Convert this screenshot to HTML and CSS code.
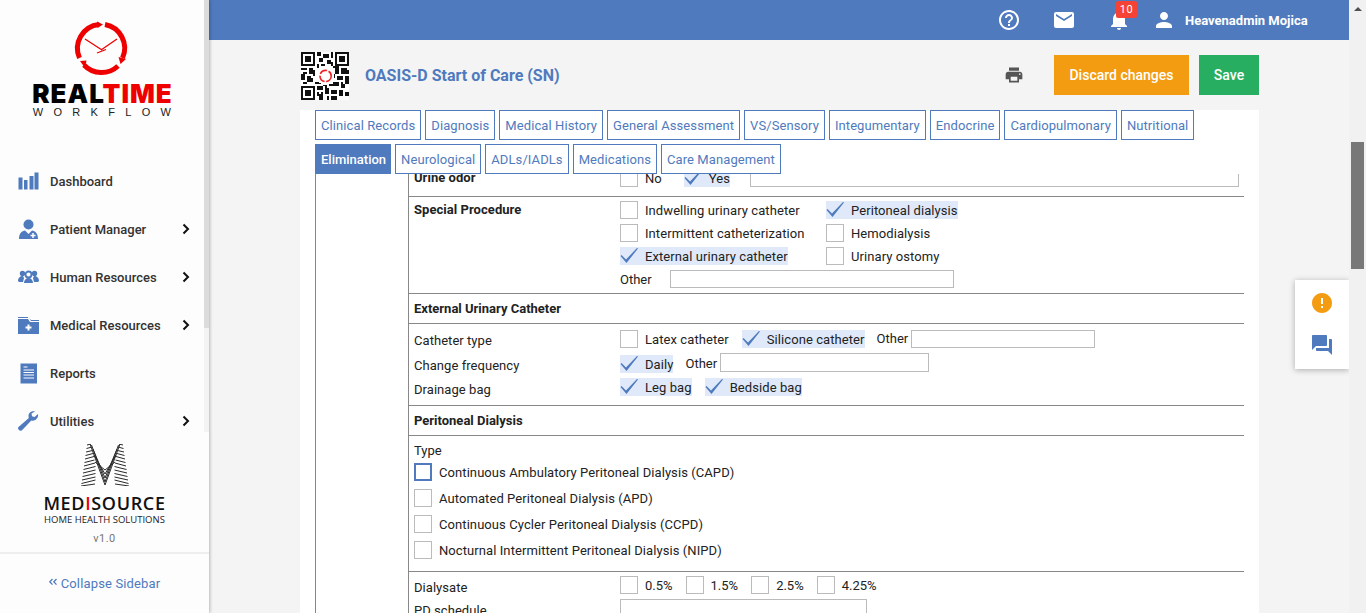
FILE: index.html
```html
<!DOCTYPE html>
<html>
<head>
  <meta charset="UTF-8">
  <title>OASIS-D Start of Care (SN)</title>
  <link rel="stylesheet" href="styles.css">
</head>
<body>
  <aside class="sidebar">
    <div class="side-top">
      <div class="logo">
        <svg class="clock" width="54" height="54" viewBox="0 0 54 54">
          <g fill="none" stroke="#ee0000" stroke-width="5">
            <path d="M4.500 36A24 24 0 0 1 24 2.500"/>
            <path d="M30 2.500A24 24 0 0 1 47.500 36"/>
            <path d="M43 44A24 24 0 0 1 9 43"/>
          </g>
          <path d="M22-.5l6 3-5.500 3.500zM43.500 35l7.500 2-5.500 5zM5 39l6.500-.5L10 46z" fill="#ee0000"/>
          <path d="M27 28L10 17M26 28L42 17M22 31l9-3.500" stroke="#ee0000" stroke-width="1.300" fill="none"/>
        </svg>
        <div class="logo-name">REAL<span class="red">TIME</span></div>
        <div class="logo-sub">WORKFLOW</div>
      </div>
      <nav class="menu">
        <a class="menu-item">
          <svg width="21" height="18" viewBox="0 0 21 18"><path d="M.500 5.500h4v12h-4zM6 8h3.500v9.500H6zM11.500 4h4v13.500h-4zM16.500.500h4v17h-4z" fill="#4f7abd"/></svg>
          <span>Dashboard</span>
        </a>
        <a class="menu-item has-sub">
          <svg width="21" height="21" viewBox="0 0 21 21"><circle cx="10.500" cy="5.500" r="5" fill="#4f7abd"/><path d="M1 20c0-6 3-8 6-8.500l3.500 3.500 3.500-3.500c3 .5 6 2.500 6 8.500z" fill="#4f7abd"/><path d="M15 14v5M12.500 16.500h5" stroke="#fff" stroke-width="1.500"/></svg>
          <span>Patient Manager</span>
          <svg class="arrow" width="8" height="12" viewBox="0 0 8 12"><path d="M1.500 1.500L6 6l-4.500 4.500" fill="none" stroke="#111" stroke-width="2"/></svg>
        </a>
        <a class="menu-item has-sub">
          <svg width="21" height="14" viewBox="0 0 21 14"><circle cx="10.500" cy="4.500" r="3" fill="none" stroke="#4f7abd" stroke-width="1.800"/><circle cx="4.500" cy="3.500" r="2.700" fill="#4f7abd"/><circle cx="16.500" cy="3.500" r="2.700" fill="#4f7abd"/><path d="M0 11c0-3 2-5 5-5l1 2-1 4H1zM21 11c0-3-2-5-5-5l-1 2 1 4h4zM6 13c0-3 2-5 4.500-5S15 10 15 13z" fill="#4f7abd"/></svg>
          <span>Human Resources</span>
          <svg class="arrow" width="8" height="12" viewBox="0 0 8 12"><path d="M1.500 1.500L6 6l-4.500 4.500" fill="none" stroke="#111" stroke-width="2"/></svg>
        </a>
        <a class="menu-item has-sub">
          <svg width="21" height="17" viewBox="0 0 21 17"><path d="M0 0h10v1H0zM11 1l2 2h8v1H13z" fill="#4f7abd"/><path d="M0 2h10l2 3h9v12H0z" fill="#4f7abd"/><path d="M10.500 7.500v6M7.500 10.500h6" stroke="#fff" stroke-width="2"/></svg>
          <span>Medical Resources</span>
          <svg class="arrow" width="8" height="12" viewBox="0 0 8 12"><path d="M1.500 1.500L6 6l-4.500 4.500" fill="none" stroke="#111" stroke-width="2"/></svg>
        </a>
        <a class="menu-item">
          <svg width="21" height="21" viewBox="0 0 21 21"><path d="M2.500 .500h16.500v20H2.500z" fill="#4f7abd"/><path d="M5.500 4h4M5.500 7h10.500M5.500 9.500h10.500M5.500 12h10.500M5.500 15h10.500" stroke="#fff" stroke-width="1"/></svg>
          <span>Reports</span>
        </a>
        <a class="menu-item has-sub">
          <svg width="21" height="20" viewBox="0 0 21 20"><path d="M20 3l-3.500 3-2.500-.8L13.500 2.500 17 .500c-3-1-6.500 1-6.500 4.500 0 1 .2 1.500.3 2L.5 16c-.8 1-.5 2 .5 3s2 1 3 .2l9.300-9.600c3.700 1.200 7.500-2.600 6.700-6.600z" fill="#4f7abd"/></svg>
          <span>Utilities</span>
          <svg class="arrow" width="8" height="12" viewBox="0 0 8 12"><path d="M1.500 1.500L6 6l-4.500 4.500" fill="none" stroke="#111" stroke-width="2"/></svg>
        </a>
      </nav>
      <div class="side-scroll"></div>
    </div>
    <div class="brand">
      <svg class="brand-mark" width="48" height="42" viewBox="0 0 48 42">
        <g fill="none" stroke="#2a2a2a" stroke-width="1">
          <path d="M6 1l4-1M5.500 4.500l5.500-1.500M5 8l6.500-1.500M4.500 11.500l7.500-2M4 15l9-2.500M3.500 18.500l10-2.500M3 22l11-3M2.500 25.500l12-3M2 29l12.500-3M1.500 32.500l13-3M1 36l13.500-3M.5 39.500l14-3.500M0 42l14-2"/>
          <path d="M42 1l-4-1M42.500 4.500l-5.500-1.500M43 8l-6.500-1.500M43.500 11.500l-7.500-2M44 15l-9-2.500M44.500 18.500l-10-2.500M45 22l-11-3M45.500 25.500l-12-3M46 29l-12.500-3M46.500 32.500l-13-3M47 36l-13.500-3M47.500 39.500l-14-3.500M48 42l-14-2"/>
          <path d="M9 0l15 41M10.500 1L24 38M12 5l12 29M13 11l11 19M14 18l10 8"/>
          <path d="M39 0L24 41M37.500 1L24 38M36 5L24 34M35 11L24 30M34 18L24 26"/>
        </g>
      </svg>
      <div class="brand-name">MED<span class="red">I</span>SOURCE</div>
      <div class="brand-sub">HOME HEALTH SOLUTIONS</div>
      <div class="version">v1.0</div>
    </div>
    <a class="collapse">
      <svg class="collapse-icon" width="8" height="8" viewBox="0 0 8 8"><path d="M3.500 1L.8 3.800l2.700 2.800M7.500 1L4.800 3.800l2.700 2.800" fill="none" stroke="#4f7abd" stroke-width="1.300"/></svg>
      <span>Collapse Sidebar</span>
    </a>
  </aside>

  <div class="main">
    <header class="topbar">
      <svg class="top-icon" width="24" height="24" viewBox="0 0 24 24"><path fill="#fff" d="M11 18h2v-2h-2v2zm1-16C6.480 2 2 6.480 2 12s4.480 10 10 10 10-4.480 10-10S17.520 2 12 2zm0 18c-4.410 0-8-3.590-8-8s3.590-8 8-8 8 3.590 8 8-3.590 8-8 8zm0-14c-2.210 0-4 1.790-4 4h2c0-1.100.9-2 2-2s2 .9 2 2c0 2-3 1.750-3 5h2c0-2.250 3-2.500 3-5 0-2.210-1.790-4-4-4z"/></svg>
      <svg class="top-icon mail" width="24" height="24" viewBox="0 0 24 24"><path fill="#fff" d="M20 4H4c-1.100 0-1.990.9-1.990 2L2 18c0 1.100.9 2 2 2h16c1.100 0 2-.9 2-2V6c0-1.100-.9-2-2-2zm0 4l-8 5-8-5V6l8 5 8-5v2z"/></svg>
      <div class="bell">
        <svg width="24" height="24" viewBox="0 0 24 24"><path fill="#fff" d="M12 22c1.100 0 2-.9 2-2h-4c0 1.100.9 2 2 2zm6-6v-5c0-3.070-1.630-5.640-4.500-6.320V4c0-.83-.67-1.500-1.500-1.500s-1.500.67-1.500 1.500v.68C7.640 5.360 6 7.920 6 11v5l-2 2v1h16v-1l-2-2z"/></svg>
        <span class="badge">10</span>
      </div>
      <svg class="top-icon person" width="24" height="24" viewBox="0 0 24 24"><path fill="#fff" d="M12 12c2.210 0 4-1.790 4-4s-1.790-4-4-4-4 1.790-4 4 1.790 4 4 4zm0 2c-2.670 0-8 1.340-8 4v2h16v-2c0-2.660-5.330-4-8-4z"/></svg>
      <span class="user">Heavenadmin Mojica</span>
    </header>

    <div class="content">
      <div class="page-head">
        <svg class="qr" width="48" height="48" viewBox="0 0 24 24" shape-rendering="crispEdges">
          <path fill="#111" d="M0 0h7v7H0zM17 0h7v7h-7zM0 17h7v7H0z"/>
          <path fill="#fff" d="M1 1h5v5H1zM18 1h5v5h-5zM1 18h5v5H1z"/>
          <path fill="#111" d="M2 2h3v3H2zM19 2h3v3h-3zM2 19h3v3H2zM8 0h2v2H8zM11 1h3v2h-3zM15 0h1v3h-1zM9 3h2v2H9zM13 4h2v2h-2zM8 6h1v2H8zM0 8h3v1H0zM4 8h2v1H4zM4 9h3v2H4zM1 10h2v1H1zM0 11h2v3H0zM3 12h2v1H3zM3 13h3v2H3zM6 11h1v1H6zM1 15h2v1H1zM16 7h3v1h-3zM17 8h2v3h-2zM20 8h3v1h-3zM20 9h4v2h-4zM16 11h1v2h-1zM18 12h3v2h-3zM22 12h2v1h-2zM22 13h2v3h-2zM16 15h3v2h-3zM20 15h1v1h-1zM20 16h2v2h-2zM8 17h3v2H8zM12 17h1v1h-1zM12 18h2v3h-2zM9 21h2v3H9zM15 19h3v2h-3zM19 19h2v3h-2zM22 20h2v2h-2zM15 22h3v2h-3zM8 15h2v1H8zM11 16h2v1h-2zM14 16h2v1h-2zM10 6h2v1h-2zM15 5h1v2h-1zM10 20h1v1h-1zM8 20h1v2H8zM13 22h1v2h-1zM7 15h1v1H7z"/>
          <circle cx="12.300" cy="12" r="4.500" fill="#fff"/>
          <circle cx="12.300" cy="12" r="2.800" fill="none" stroke="#e22" stroke-width=".8" stroke-dasharray="4 .8" shape-rendering="auto"/>
        </svg>
        <h1 class="page-title">OASIS-D Start of Care (SN)</h1>
        <svg class="print" width="20" height="20" viewBox="0 0 24 24"><path fill="#555" d="M19 8H5c-1.660 0-3 1.340-3 3v6h4v4h12v-4h4v-6c0-1.660-1.340-3-3-3zm-3 11H8v-5h8v5zm3-7c-.55 0-1-.45-1-1s.45-1 1-1 1 .45 1 1-.45 1-1 1zm-1-9H6v4h12V3z"/></svg>
        <button class="btn btn-discard">Discard changes</button>
        <button class="btn btn-save">Save</button>
      </div>

      <div class="card">
        <div class="tabs">
          <a class="tab">Clinical Records</a>
          <a class="tab">Diagnosis</a>
          <a class="tab">Medical History</a>
          <a class="tab">General Assessment</a>
          <a class="tab">VS/Sensory</a>
          <a class="tab">Integumentary</a>
          <a class="tab">Endocrine</a>
          <a class="tab">Cardiopulmonary</a>
          <a class="tab">Nutritional</a>
          <a class="tab active">Elimination</a>
          <a class="tab">Neurological</a>
          <a class="tab">ADLs/IADLs</a>
          <a class="tab">Medications</a>
          <a class="tab">Care Management</a>
        </div>

        <div class="form-clip">
          <div class="form-outer">
            <div class="form-table">

              <div class="row urine">
                <div class="row-label">Urine odor</div>
                <div class="row-field line">
                  <label class="check"><i class="box"></i>No</label>
                  <label class="check on"><i class="box"><svg viewBox="0 0 18 18"><path d="M.5 9l1-1 4.500 4.500L17 1l1 .5L6.500 16z"/></svg></i>Yes</label>
                  <input class="text odor-input">
                </div>
              </div>

              <div class="row special">
                <div class="row-label strong">Special Procedure</div>
                <div class="row-field">
                  <div class="proc-grid">
                    <label class="check"><i class="box"></i>Indwelling urinary catheter</label>
                    <label class="check on"><i class="box"><svg viewBox="0 0 18 18"><path d="M.5 9l1-1 4.500 4.500L17 1l1 .5L6.500 16z"/></svg></i>Peritoneal dialysis</label>
                    <label class="check"><i class="box"></i>Intermittent catheterization</label>
                    <label class="check"><i class="box"></i>Hemodialysis</label>
                    <label class="check on"><i class="box"><svg viewBox="0 0 18 18"><path d="M.5 9l1-1 4.500 4.500L17 1l1 .5L6.500 16z"/></svg></i>External urinary catheter</label>
                    <label class="check"><i class="box"></i>Urinary ostomy</label>
                  </div>
                  <div class="line other-row"><span class="other-label">Other</span><input class="text other-input"></div>
                </div>
              </div>

              <div class="section-title">External Urinary Catheter</div>

              <div class="catheter">
                <div class="row plain">
                  <div class="row-label">Catheter type</div>
                  <div class="row-field line">
                    <label class="check"><i class="box"></i>Latex catheter</label>
                    <label class="check on"><i class="box"><svg viewBox="0 0 18 18"><path d="M.5 9l1-1 4.500 4.500L17 1l1 .5L6.500 16z"/></svg></i>Silicone catheter</label>
                    <span class="other-inline">Other</span><input class="text type-input">
                  </div>
                </div>
                <div class="row plain">
                  <div class="row-label">Change frequency</div>
                  <div class="row-field line">
                    <label class="check on"><i class="box"><svg viewBox="0 0 18 18"><path d="M.5 9l1-1 4.500 4.500L17 1l1 .5L6.500 16z"/></svg></i>Daily</label>
                    <span class="other-inline">Other</span><input class="text freq-input">
                  </div>
                </div>
                <div class="row plain">
                  <div class="row-label">Drainage bag</div>
                  <div class="row-field line">
                    <label class="check on"><i class="box"><svg viewBox="0 0 18 18"><path d="M.5 9l1-1 4.500 4.500L17 1l1 .5L6.500 16z"/></svg></i>Leg bag</label>
                    <label class="check on"><i class="box"><svg viewBox="0 0 18 18"><path d="M.5 9l1-1 4.500 4.500L17 1l1 .5L6.500 16z"/></svg></i>Bedside bag</label>
                  </div>
                </div>
              </div>

              <div class="section-title">Peritoneal Dialysis</div>

              <div class="dialysis-type">
                <div class="type-label">Type</div>
                <label class="check"><i class="box focus"></i>Continuous Ambulatory Peritoneal Dialysis (CAPD)</label>
                <label class="check"><i class="box"></i>Automated Peritoneal Dialysis (APD)</label>
                <label class="check"><i class="box"></i>Continuous Cycler Peritoneal Dialysis (CCPD)</label>
                <label class="check"><i class="box"></i>Nocturnal Intermittent Peritoneal Dialysis (NIPD)</label>
              </div>

              <div class="dialysate">
                <div class="row plain">
                  <div class="row-label">Dialysate</div>
                  <div class="row-field line">
                    <label class="check"><i class="box"></i>0.5%</label>
                    <label class="check"><i class="box"></i>1.5%</label>
                    <label class="check"><i class="box"></i>2.5%</label>
                    <label class="check"><i class="box"></i>4.25%</label>
                  </div>
                </div>
                <div class="row plain">
                  <div class="row-label">PD schedule</div>
                  <div class="row-field line"><input class="text pd-input"></div>
                </div>
              </div>

            </div>
          </div>
        </div>
      </div>
    </div>

    <div class="float-panel">
      <svg width="24" height="24" viewBox="0 0 24 24"><path fill="#f39c12" d="M12 2C6.480 2 2 6.480 2 12s4.480 10 10 10 10-4.480 10-10S17.520 2 12 2zm1 15h-2v-2h2v2zm0-4h-2V7h2v6z"/></svg>
      <svg width="24" height="24" viewBox="0 0 24 24"><path fill="#4f7abd" d="M21 6h-2v9H6v2c0 .55.45 1 1 1h11l4 4V7c0-.55-.45-1-1-1zm-4 6V3c0-.55-.45-1-1-1H3c-.55 0-1 .45-1 1v14l4-4h10c.55 0 1-.45 1-1z"/></svg>
    </div>
  </div>

  <div class="page-scroll">
    <span class="scroll-up"></span>
    <div class="scroll-thumb"></div>
  </div>
</body>
</html>
```

FILE: styles.css
```css
* { box-sizing: border-box; }
html, body { height: 100%; }
body { margin: 0; display: flex; overflow: hidden; font-family: Roboto, "Liberation Sans", sans-serif; font-size: 13px; color: #222; background: #f4f4f4; }

.red { color: #ee0000; }

/* sidebar */
.sidebar { width: 209px; flex: none; display: flex; flex-direction: column; background: #fdfdfd; box-shadow: 1px 0 3px rgba(0,0,0,.25); position: relative; z-index: 2; }
.side-top { height: 432px; position: relative; flex: none; overflow: hidden; }
.side-scroll { position: absolute; top: 0; right: 0; width: 5px; height: 328px; background: #dcdcdc; }
.side-top::after { content: ""; position: absolute; top: 0; bottom: 0; right: 0; width: 5px; background: #f3f3f3; z-index: -1; }

.logo { width: 204px; height: 157px; padding-top: 22px; display: flex; flex-direction: column; align-items: center; }
.clock { display: block; overflow: visible; }
.logo-name { font-family: Inter, sans-serif; font-weight: 900; font-size: 26px; line-height: 24px; margin-top: 6px; margin-right: -1px; color: #000; letter-spacing: 1px; }
.logo-sub { font-family: "Liberation Sans", sans-serif; font-size: 11px; line-height: 12px; letter-spacing: 10.300px; margin-right: -10px; color: #222; }

.menu { width: 204px; }
.menu-item { height: 48px; display: flex; align-items: center; padding-left: 18px; font-weight: 500; font-size: 13px; color: #333; }
.menu-item svg:first-child { width: 21px; flex: none; margin-right: 11px; }
.menu-item .arrow { margin-left: auto; margin-right: 14px; }

.brand { height: 120px; display: flex; flex-direction: column; align-items: center; padding-top: 12px; flex: none; }
.brand-mark { display: block; }
.brand-name { font-family: "Open Sans", sans-serif; font-size: 18px; line-height: 20px; margin-top: 7px; color: #111; font-weight: 600; letter-spacing: .65px; }
.brand-sub { font-family: "Open Sans", sans-serif; font-size: 9.500px; line-height: 11px; margin-top: 1px; color: #222; }
.version { font-size: 11px; color: #777; margin-top: 7px; line-height: 13px; letter-spacing: .5px; }
.collapse { flex: 1; border-top: 2px solid #eee; display: flex; align-items: center; justify-content: center; color: #4f7abd; font-size: 13px; letter-spacing: .15px; }
.collapse-icon { margin-right: 4px; margin-top: -3px; }

/* main column */
.main { flex: 1; min-width: 0; display: flex; flex-direction: column; position: relative; }
.topbar { height: 40px; flex: none; background: #4f7abd; display: flex; align-items: center; color: #fff; padding-left: 788px; }
.top-icon { display: block; }
.mail { margin-left: 31px; }
.bell { position: relative; width: 24px; height: 24px; margin-left: 31px; }
.badge { position: absolute; top: -7px; left: 9px; min-width: 21px; height: 17px; background: #f44336; border-radius: 2px; color: #fff; font-size: 11px; line-height: 17px; text-align: center; letter-spacing: .5px; }
.person { margin-left: 21px; }
.user { margin-left: 9px; font-weight: 700; font-size: 13px; }

.content { flex: 1; min-height: 0; display: flex; flex-direction: column; padding: 0 90px 0 91px; }
.page-head { height: 70px; flex: none; display: flex; align-items: center; }
.qr { margin-left: 1px; margin-top: 1px; background: #fff; }
.page-title { margin: 0 0 0 16px; font-size: 16px; font-weight: 700; color: #4f7abd; }
.print { margin-left: auto; margin-right: 30px; }
.btn { border: none; height: 40px; padding: 0; color: #fff; font-family: inherit; font-size: 14px; font-weight: 500; }
.btn-discard { width: 135px; background: #f39c12; }
.btn-save { width: 60px; margin-left: 10px; background: #27ae60; }

.card { flex: 1; min-height: 0; background: #fff; display: flex; flex-direction: column; padding: 0 15px; }
.tabs { flex: none; display: flex; flex-wrap: wrap; gap: 4px; }
.tab { height: 30px; border: 1px solid #4f7abd; padding: 0 5px; display: flex; align-items: center; color: #4f7abd; font-size: 13px; letter-spacing: .09px; }
.tab.active { background: #4f7abd; color: #fff; font-weight: 500; padding: 0 4px 0 5px; letter-spacing: 0; }

/* form */
.form-clip { flex: 1; min-height: 0; overflow: hidden; }
.form-outer { border-left: 1px solid #888; padding-left: 92px; height: 500px; }
.form-table { border-left: 1px solid #888; border-right: 1px solid #888; margin-top: -8px; width: 837px; }

.row { display: flex; }
.row-label { width: 211px; flex: none; padding-left: 5px; line-height: 18px; letter-spacing: .05px; }
.row-label.strong, .section-title { font-weight: 700; }
.row-field { flex: 1; min-width: 0; }
.line { display: flex; align-items: center; }

.check { display: inline-flex; align-items: center; height: 18px; letter-spacing: .08px; }
.check .box { width: 18px; height: 18px; border: 1px solid #bbb; background: #fff; margin-right: 7px; flex: none; display: block; }
.check.on { background: #dfe9f9; }
.check.on .box { border: none; background: transparent; }
.box svg { display: block; width: 18px; height: 18px; fill: #4f7abd; }
.box.focus { border: 2px solid #4f7abd; }
.text { border: 1px solid #bbb; height: 18px; padding: 0; background: #fff; }

.urine { height: 31px; border-bottom: 1px solid #888; padding-top: 3px; }
.urine .line { align-items: flex-start; }
.urine .row-label { line-height: 16px; padding-top: 1px; font-weight: 700; }
.urine .check { margin-right: 22px; }
.urine .check.on { margin-right: 20px; }
.odor-input { width: 489px; }

.special { height: 97px; padding-top: 4px; border-bottom: 1px solid #888; }
.proc-grid { display: grid; grid-template-columns: 206px max-content; row-gap: 5px; justify-items: start; }
.other-row { margin-top: 5px; height: 18px; }
.other-label { width: 50px; }
.other-input { width: 284px; }

.section-title { height: 30px; line-height: 29px; padding-left: 5px; border-bottom: 1px solid #888; }

.catheter { height: 82px; border-bottom: 1px solid #888; padding-top: 6px; }
.catheter .row { height: 25px; }
.catheter .row:nth-child(2) { height: 23px; }
.catheter .row:nth-child(3) { height: 23px; }
.catheter .line { align-items: flex-start; }
.catheter .row-label { padding-top: 2px; }
.catheter .row:nth-child(3) .row-label { padding-top: 3px; }
.catheter .check { margin-right: 13px; }
.other-inline { margin-left: -1px; margin-right: 3px; line-height: 18px; }
.type-input { width: 184px; }
.freq-input { width: 209px; height: 19px; margin-top: -2px; }

.dialysis-type { height: 136px; border-bottom: 1px solid #888; padding: 7px 0 0 5px; display: flex; flex-direction: column; align-items: flex-start; }
.type-label { height: 16px; line-height: 15px; }
.dialysis-type .check { margin-top: 8px; }
.dialysis-type .check:nth-child(2) { margin-top: 4px; }

.dialysate { padding-top: 4px; }
.dialysate .row { height: 23px; }
.dialysate .line { align-items: flex-start; }
.dialysate .row-label { padding-top: 3px; }
.dialysate .check { margin-right: 13px; letter-spacing: 0; }
.pd-input { width: 247px; height: 24px; }

/* floating actions */
.float-panel { position: absolute; top: 280px; right: 0; width: 54px; height: 89px; background: #fff; box-shadow: 0 1px 6px rgba(0,0,0,.3); display: flex; flex-direction: column; align-items: center; justify-content: space-between; padding: 11px 0 12px; }

/* page scrollbar */
.page-scroll { width: 17px; flex: none; background: #f1f1f1; position: relative; }
.scroll-up { position: absolute; top: 7px; left: 5px; border: 4px solid transparent; border-top: 0; border-bottom: 4px solid #505050; }
.scroll-thumb { position: absolute; top: 142px; left: 2px; width: 13px; height: 127px; background: #787878; }
```
